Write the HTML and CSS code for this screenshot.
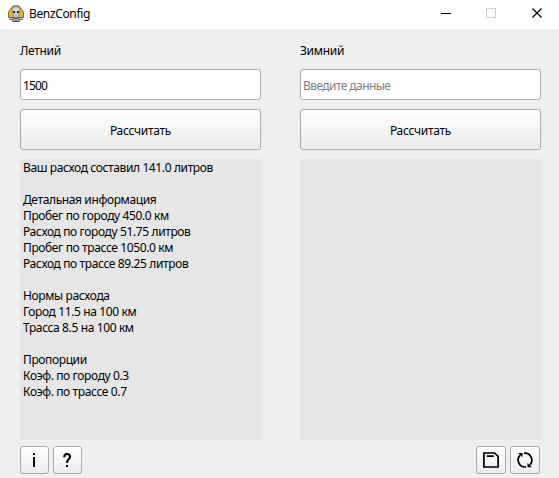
FILE: index.html
```html
<!DOCTYPE html>
<html lang="ru">
<head>
<meta charset="utf-8">
<title>BenzConfig</title>
<link rel="stylesheet" href="styles.css">
</head>
<body>
<header class="titlebar">
  <svg class="logo" width="16" height="17" viewBox="0 0 16 17">
    <path d="M5 .8h6l4.500 6.200v5.500H.5V7z" fill="#e6b91a" stroke="#5d5628" stroke-width=".8"/>
    <path d="M1 13.500l3 0 8 2.500M15 13.500l-3 0-8 2.500" stroke="#4a4a4a" stroke-width="2.600" fill="none"/>
    <path d="M1 13.500l3 0 8 2.500M15 13.500l-3 0-8 2.500" stroke="#c4c4c4" stroke-width="1" fill="none"/>
    <path d="M6 2h4l1.700 2v4.500L10.500 10v2h-5v-2L4.300 8.500V4z" fill="#dedede" stroke="#777" stroke-width=".7"/>
    <path d="M5 6h2.200v2.300H5zM8.800 6H11v2.300H8.800zM7.500 9.200h1v1h-1z" fill="#333"/>
  </svg>
  <h1 class="title">BenzConfig</h1>
  <svg class="controls" width="106" height="11" viewBox="0 0 106 11" fill="none" shape-rendering="crispEdges">
    <path d="M0 5.500h10" stroke="#000"/>
    <rect x="45.500" y=".5" width="9" height="9" stroke="#ccc"/>
    <path d="M91.500 .5l9 9m0-9l-9 9" stroke="#000" stroke-width="1.150" shape-rendering="auto"/>
  </svg>
</header>
<main class="columns">
  <section class="column">
    <label class="label" for="summer">Летний</label>
    <input class="field" id="summer" value="1500">
    <button class="button calculate">Рассчитать</button>
    <div class="result">
      <p class="line">Ваш расход составил 141.0 литров</p>
      <p class="line group">Детальная информация</p>
      <p class="line">Пробег по городу 450.0 км</p>
      <p class="line">Расход по городу 51.75 литров</p>
      <p class="line">Пробег по трассе 1050.0 км</p>
      <p class="line">Расход по трассе 89.25 литров</p>
      <p class="line group">Нормы расхода</p>
      <p class="line">Город 11.5 на 100 км</p>
      <p class="line">Трасса 8.5 на 100 км</p>
      <p class="line group">Пропорции</p>
      <p class="line">Коэф. по городу 0.3</p>
      <p class="line">Коэф. по трассе 0.7</p>
    </div>
  </section>
  <section class="column">
    <label class="label" for="winter">Зимний</label>
    <input class="field" id="winter" placeholder="Введите данные">
    <button class="button calculate">Рассчитать</button>
    <div class="result"></div>
  </section>
</main>
<footer class="toolbar">
  <button class="button tool"><svg width="21" height="20" viewBox="0 0 21 20"><path d="M9 3h2v2H9zM9 7h2v10H9z"/></svg></button>
  <button class="button tool"><svg width="21" height="20" viewBox="0 0 21 20" fill="none"><path d="M7.200 7.300C7.200 3 13 3 13 6.700c0 2.800-3 2.500-3 6.300" stroke="#000" stroke-width="2.100"/><path d="M9 15h2v2H9z" fill="#000"/></svg></button>
  <button class="button tool wide save"><svg width="20" height="20" viewBox="0 0 20 20" fill="none" stroke="#000" stroke-width="1.700"><path d="M2.900 3h10.600l3.600 3.400V17H2.900zM5.800 6.200h7"/></svg></button>
  <button class="button tool wide"><svg width="20" height="20" viewBox="0 0 20 20" fill="none"><path d="M9 3.300A6.900 6.900 0 0 1 14.800 15M11 16.900A6.900 6.900 0 0 1 5.200 5.200" stroke="#000" stroke-width="1.700"/><path d="M3.200 3H7.500V7.300zM16.800 17.200H12.500V12.900z" fill="#000"/></svg></button>
</footer>
</body>
</html>
```
FILE: styles.css
```css
* { box-sizing: border-box; }
body {
  margin: 0;
  width: 559px;
  height: 478px;
  overflow: hidden;
  background: #efefef;
  color: #000;
  font: 12px/16px "Noto Sans", sans-serif;
  letter-spacing: -0.3px;
}
.titlebar {
  display: flex;
  align-items: center;
  height: 29px;
  padding: 0 12px 2px 8px;
  background: #fff;
}
.title { margin: 1px 0 0 5px; font-size: 12px; font-weight: 400; letter-spacing: -0.35px; }
.controls { margin-left: auto; }
.columns { display: flex; gap: 39px; padding: 14px 18px 0 20px; }
.column { display: flex; flex-direction: column; width: 241px; }
.label { height: 17px; }
.field {
  height: 31px;
  margin: 9px 0;
  padding: 2px 2px 0;
  border: 1px solid #ababab;
  border-radius: 3px;
  background: #fff;
  color: #000;
  font: inherit;
  letter-spacing: -0.9px;
  outline: 0;
}
.field::placeholder { color: #808080; letter-spacing: -0.58px; opacity: 1; }
.button {
  padding: 0;
  border: 1px solid #ababab;
  border-radius: 3px;
  background: linear-gradient(#fff, #ececec);
  color: #000;
  font: inherit;
  letter-spacing: inherit;
}
.calculate { height: 41px; padding-top: 2px; }
.result { height: 281px; margin-top: 9px; padding: 1px 3px; background: #e6e6e6; letter-spacing: -0.38px; }
.line { margin: 0; white-space: nowrap; }
.group { margin-top: 16px; }
.toolbar { display: flex; gap: 4px; padding: 6px 19px 0 20px; }
.tool { display: flex; align-items: center; justify-content: center; width: 29px; height: 28px; }
.wide { width: 30px; }
.save { margin-left: auto; }
```
